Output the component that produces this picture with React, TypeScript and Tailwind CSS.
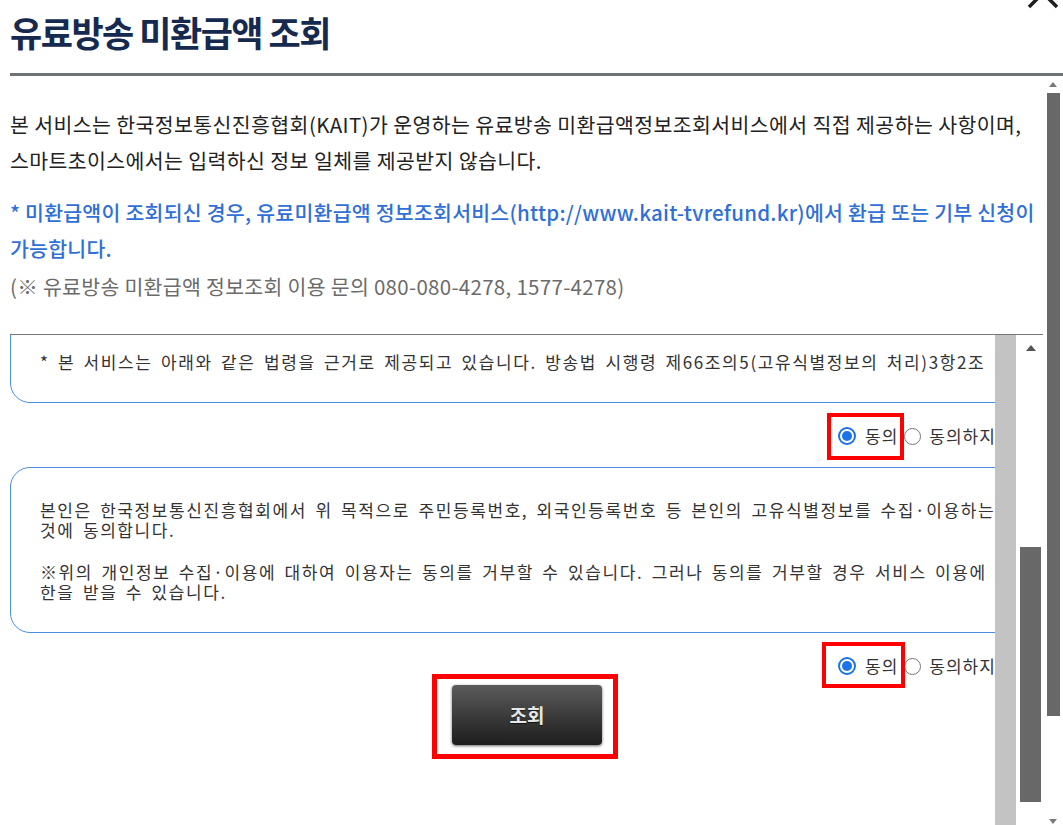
import React from "react";

function Radio({ checked }: { checked: boolean }) {
  return checked ? (
    <span className="flex h-[18px] w-[18px] shrink-0 items-center justify-center rounded-full border-2 border-[#1a73e8] bg-white">
      <span className="h-[10px] w-[10px] rounded-full bg-[#1a73e8]" />
    </span>
  ) : (
    <span className="h-[17px] w-[17px] shrink-0 rounded-full border border-[#767676] bg-white" />
  );
}

function AgreeRow({ variant }: { variant: 1 | 2 }) {
  return (
    <div className="flex h-[24px] items-center pl-[828px] text-[17px] leading-[20px] tracking-[1px] text-[#333] whitespace-nowrap">
      <label className="relative flex h-[24px] items-center gap-[9px]">
        <Radio checked />
        <span>동의</span>
        {variant === 1 ? (
          <span className="pointer-events-none absolute -left-[11px] -right-[6px] -top-[11px] -bottom-[12px] border-4 border-[#ff0000]" />
        ) : (
          <span className="pointer-events-none absolute -left-[16px] -right-[7px] -top-[12px] -bottom-[10px] border-4 border-[#ff0000]" />
        )}
      </label>
      <label className="ml-[6px] flex h-[24px] items-center gap-[8px]">
        <Radio checked={false} />
        <span>동의하지 않음</span>
      </label>
    </div>
  );
}

export default function App() {
  return (
    <div className="relative h-[825px] w-[1063px] overflow-hidden bg-white font-['Noto_Sans_CJK_KR',sans-serif]">
      <h1 className="h-[73px] pl-[10px] pt-[11px] text-[35px] font-bold leading-[42px] tracking-[-1.5px] text-[#152a4e]">
        유료방송 미환급액 조회
      </h1>
      <svg
        className="absolute left-[1027px] top-[-23px]"
        width="32"
        height="32"
        viewBox="0 0 32 32"
      >
        <path d="M2 2 L30 30 M30 2 L2 30" stroke="#1e1e1e" strokeWidth="3.5" fill="none" />
      </svg>
      <div className="ml-[10px] h-[3px] bg-[#6f7276]" />

      <div className="flex h-[749px]">
        <main className="flex min-w-0 flex-1 flex-col">
          <div className="whitespace-nowrap pl-[10px] pt-[30px] text-[20.5px] leading-[36px] tracking-[0.4px] text-[#222]">
            <p>
              본 서비스는 한국정보통신진흥협회(KAIT)가 운영하는 유료방송 미환급액정보조회서비스에서 직접 제공하는 사항이며,
              <br />
              스마트초이스에서는 입력하신 정보 일체를 제공받지 않습니다.
            </p>
            <p className="mt-[16px] font-medium tracking-[0.25px] text-[#2f6fd6]">
              * 미환급액이 조회되신 경우, 유료미환급액 정보조회서비스(http://www.kait-tvrefund.kr)에서 환급 또는 기부 신청이
              <br />
              가능합니다.
            </p>
            <p className="mt-[2px] tracking-[0.3px] text-[#6b6b6b]">
              (※ 유료방송 미환급액 정보조회 이용 문의 080-080-4278, 1577-4278)
            </p>
          </div>

          <div className="ml-[10px] mt-[30px] flex min-h-0 flex-1 border-t border-[#777]">
            <div className="w-[985px] shrink-0 overflow-hidden">
              <div className="w-[1034px]">
                <div className="-mt-[23px] rounded-[20px] border border-[#4a90e2] pb-[30px] pl-[29px] pt-[39px] text-[17px] leading-[20px] tracking-[1.6px] text-[#333] whitespace-nowrap [word-spacing:3px]">
                  * 본 서비스는 아래와 같은 법령을 근거로 제공되고 있습니다. 방송법 시행령 제66조의5(고유식별정보의 처리)3항2조
                </div>

                <div className="mt-[21px]">
                  <AgreeRow variant={1} />
                </div>

                <div className="mt-[19px] rounded-[20px] border border-[#4a90e2] pb-[30px] pl-[29px] pt-[32px] text-[17px] leading-[20px] tracking-[1.6px] text-[#333] whitespace-nowrap [word-spacing:3px]">
                  <p>
                    본인은 한국정보통신진흥협회에서 위 목적으로 주민등록번호, 외국인등록번호 등 본인의 고유식별정보를 수집·이용하는
                    <br />
                    것에 동의합니다.
                  </p>
                  <p className="mt-[22px]">
                    ※위의 개인정보 수집·이용에 대하여 이용자는 동의를 거부할 수 있습니다. 그러나 동의를 거부할 경우 서비스 이용에 제
                    <br />
                    한을 받을 수 있습니다.
                  </p>
                </div>

                <div className="mt-[21px]">
                  <AgreeRow variant={2} />
                </div>

                <div className="relative mx-auto mt-[7px] h-[60px] w-[150px]">
                  <button className="flex h-full w-full items-center justify-center rounded-[4px] bg-gradient-to-b from-[#5c5c5c] to-[#1e1e1e] text-[19px] font-bold text-[#e6e6e6] shadow-[0_1px_3px_rgba(0,0,0,0.6)] [text-shadow:0_1px_1px_rgba(0,0,0,0.6)]">
                    조회
                  </button>
                  <span className="pointer-events-none absolute -left-[20px] -right-[16px] -top-[11px] -bottom-[14px] border-[5px] border-[#ff0000]" />
                </div>
              </div>
            </div>
            <div className="w-[21px] shrink-0 bg-[#c3c3c3]" />
            <div className="w-[4px] shrink-0 bg-white" />
            <div className="flex w-[21px] shrink-0 flex-col items-center">
              <div className="mt-[10px] h-0 w-0 border-x-[5px] border-b-[6px] border-x-transparent border-b-[#555]" />
              <div className="mt-[196px] h-[255px] w-full bg-[#686868]" />
            </div>
            <div className="w-[2px] shrink-0" />
          </div>
        </main>

        <aside className="flex w-[20px] shrink-0 flex-col items-center">
          <div className="mt-[6px] h-0 w-0 border-x-[4px] border-b-[5px] border-x-transparent border-b-[#7a7a7a]" />
          <div className="mt-[6px] h-[623px] w-[13px] bg-[#686868]" />
          <div className="mt-[103px] h-0 w-0 border-x-[4px] border-t-[5px] border-x-transparent border-t-[#7a7a7a]" />
        </aside>
      </div>
    </div>
  );
}
